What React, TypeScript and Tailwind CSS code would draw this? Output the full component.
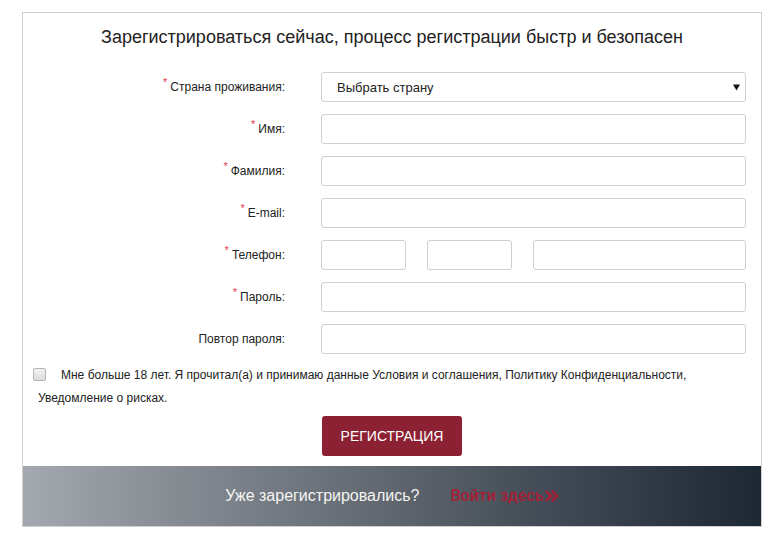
import React from "react";

const Star = () => (
  <span className="text-[#e8324f] text-[11px] relative top-[-5px] mr-[3px]">*</span>
);

const Row = ({ label, req, children }: { label: string; req?: boolean; children: React.ReactNode }) => (
  <div className="flex items-center h-[30px] mb-[12px]">
    <div className="w-[262px] text-right text-[12px] text-[#222] leading-none">
      {req && <Star />}
      {label}
    </div>
    <div className="ml-[36px] w-[425px] flex">{children}</div>
  </div>
);

const Input = ({ w }: { w?: string }) => (
  <input
    className={`h-[30px] border border-[#cfcfcf] rounded-[3px] bg-white outline-none ${w ?? "w-full"}`}
  />
);

export default function App() {
  return (
    <div className="w-[783px] h-[540px] bg-white pt-[12px] pl-[22px]" style={{ fontFamily: '"Liberation Sans", Arial, sans-serif' }}>
      <div className="w-[740px] border border-[#d0d0d0] bg-white">
        <h1 className="text-center text-[18px] leading-[24px] text-[#222] pt-[12px] mb-[23px]">
          Зарегистрироваться сейчас, процесс регистрации быстр и безопасен
        </h1>
        <Row label="Страна проживания:" req>
          <div className="relative w-full">
            <select className="appearance-none w-full h-[30px] border border-[#cfcfcf] rounded-[3px] bg-white pl-[15px] pt-[1px] text-[13px] text-[#222] outline-none">
              <option>Выбрать страну</option>
            </select>
            <svg className="absolute right-[6px] top-[12px]" width="7" height="7" viewBox="0 0 7 7">
              <path d="M0 0.5 H7 L3.5 6.5 Z" fill="#111" />
            </svg>
          </div>
        </Row>
        <Row label="Имя:" req>
          <Input />
        </Row>
        <Row label="Фамилия:" req>
          <Input />
        </Row>
        <Row label="E-mail:" req>
          <Input />
        </Row>
        <Row label="Телефон:" req>
          <div className="flex gap-[21px] w-full">
            <Input w="w-[85px]" />
            <Input w="w-[85px]" />
            <Input w="flex-1" />
          </div>
        </Row>
        <Row label="Пароль:" req>
          <Input />
        </Row>
        <Row label="Повтор пароля:">
          <Input />
        </Row>
        <p className="pl-[15px] pr-[20px] text-[12px] leading-[23px] text-[#222] mt-[-2px]">
          <span className="inline-block align-[-2px] w-[13px] h-[13px] ml-[-5px] mr-[15px] rounded-[2px] border border-[#b5b5b5] bg-gradient-to-b from-[#f2f2f2] to-[#dcdcdc]"></span>
          Мне больше 18 лет. Я прочитал(а) и принимаю данные Условия и соглашения, Политику Конфиденциальности,
          Уведомление о рисках.
        </p>
        <div className="flex justify-center mt-[6px] mb-[10px]">
          <button className="w-[140px] h-[40px] rounded-[3px] bg-[#8b2132] text-white text-[14px]">
            РЕГИСТРАЦИЯ
          </button>
        </div>
        <div className="h-[60px] flex items-center justify-center bg-gradient-to-r from-[#a4a8af] via-[#5f666e] to-[#1d2835]">
          <span className="text-[16px] text-[#f4f4f4]">Уже зарегистрировались?</span>
          <span className="ml-[31px] flex items-center text-[#a51f36] text-[16px] font-medium" style={{ fontFamily: "Roboto, sans-serif" }}>
            Войти здесь
            <svg width="14" height="12" viewBox="0 0 14 12" className="ml-[1px]">
              <path d="M1 1 L6 6 L1 11" stroke="#a51f36" strokeWidth="2.6" fill="none" />
              <path d="M7 1 L12 6 L7 11" stroke="#a51f36" strokeWidth="2.6" fill="none" />
            </svg>
          </span>
        </div>
      </div>
    </div>
  );
}
